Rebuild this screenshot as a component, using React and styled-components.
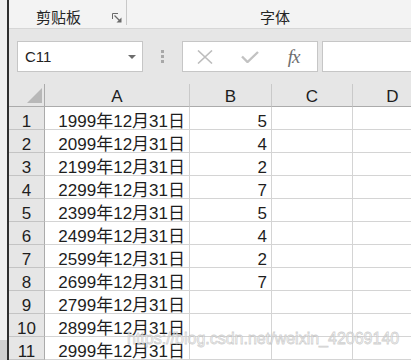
import React from 'react';
import styled, { createGlobalStyle } from 'styled-components';

const GlobalStyle = createGlobalStyle`
  html, body {
    margin: 0;
    padding: 0;
    background: #ffffff;
  }
  * {
    box-sizing: border-box;
  }
`;

const rows = [
  { year: 1999, b: 5 },
  { year: 2099, b: 4 },
  { year: 2199, b: 2 },
  { year: 2299, b: 7 },
  { year: 2399, b: 5 },
  { year: 2499, b: 4 },
  { year: 2599, b: 2 },
  { year: 2699, b: 7 },
  { year: 2799, b: null },
  { year: 2899, b: null },
  { year: 2999, b: null },
];

const columns = ['A', 'B', 'C', 'D'];

const Page = styled.div`
  position: relative;
  display: flex;
  width: 411px;
  height: 360px;
  overflow: hidden;
  font-family: "Liberation Sans", "Noto Sans CJK SC", sans-serif;
`;

const Rail = styled.div`
  width: 7px;
  display: flex;
  flex-direction: column;
`;

const RailPart = styled.div`
  flex: ${p => (p.$fill ? 1 : 'none')};
  height: ${p => (p.$fill ? 'auto' : '20px')};
  background: ${p => (p.$fill ? '#f0f0f0' : '#cfcfcf')};
`;

const Edge = styled.div`
  width: 2px;
  background: #2f2f2f;
`;

const Main = styled.div`
  flex: 1;
  display: flex;
  flex-direction: column;
  overflow: hidden;
`;

const Ribbon = styled.div`
  display: flex;
  height: 30px;
  background: #f3f3f3;
  border-bottom: 1px solid #d6d6d6;
  color: #262626;
  font-size: 15px;
`;

const ClipGroup = styled.div`
  width: 118px;
  display: flex;
  align-items: center;
  padding: 6px 5px 0 27px;
  background: linear-gradient(#c8c8c8, #c8c8c8) right top / 1px 25px no-repeat;
`;

const GroupLabel = styled.span`
  line-height: 18px;
  font-family: "Noto Sans CJK SC", sans-serif;
`;

const Launcher = styled.svg`
  margin-left: auto;
  margin-top: 1px;
`;

const FontGroup = styled.div`
  flex: 1;
  display: flex;
  align-items: center;
  padding: 6px 0 0 133px;
`;

const FormulaBar = styled.div`
  display: flex;
  align-items: flex-start;
  height: 56px;
  padding: 12px 0 0 8px;
  background: #e6e6e6;
`;

const NameBox = styled.div`
  width: 126px;
  height: 31px;
  display: flex;
  align-items: center;
  justify-content: space-between;
  padding: 0 6px 0 7px;
  background: #fff;
  border: 1px solid #c6c6c6;
  font-size: 15px;
  color: #222;
`;

const Dots = styled.div`
  width: 39px;
  height: 31px;
  display: flex;
  flex-direction: column;
  align-items: center;
  justify-content: center;
  gap: 2px;
  padding-right: 1px;
`;

const Dot = styled.span`
  width: 3px;
  height: 3px;
  background: #a8a8a8;
`;

const FxBox = styled.div`
  width: 136px;
  height: 31px;
  display: grid;
  grid-template-columns: repeat(3, 1fr);
  align-items: center;
  justify-items: center;
  background: #fff;
  border: 1px solid #c6c6c6;
`;

const FxLabel = styled.span`
  font-family: "Liberation Serif", serif;
  font-style: italic;
  font-size: 19px;
  color: #6e6e6e;
  letter-spacing: -1px;
  margin-right: 2px;
`;

const FormulaInput = styled.div`
  flex: 1;
  height: 31px;
  margin-left: 4px;
  background: #fff;
  border: 1px solid #c6c6c6;
  border-right: none;
`;

const Sheet = styled.div`
  display: grid;
  grid-template-columns: 36px 145px 82px 81px 80px;
  grid-auto-rows: 23px;
  font-size: 17px;
  color: #1e1e1e;
`;

const HeadCell = styled.div`
  display: flex;
  align-items: flex-end;
  justify-content: ${p => (p.$corner ? 'flex-end' : 'center')};
  padding: ${p => (p.$corner ? '0 2px 3px 0' : '0 0 1px 0')};
  line-height: 17px;
  background: #e6e6e6;
  border-right: 1px solid ${p => (p.$corner ? '#ababab' : '#c9c9c9')};
  border-bottom: 1px solid #ababab;
`;

const RowHead = styled.div`
  display: flex;
  align-items: flex-end;
  justify-content: center;
  line-height: 14px;
  background: #e6e6e6;
  border-right: 1px solid #ababab;
  border-bottom: 1px solid #c4c4c4;
`;

const Cell = styled.div`
  display: flex;
  align-items: flex-end;
  justify-content: flex-end;
  padding: 0 4px 0 0;
  line-height: 14px;
  white-space: nowrap;
  background: #fff;
  border-right: 1px solid #d4d4d4;
  border-bottom: 1px solid #d4d4d4;
`;

const Watermark = styled.div`
  position: absolute;
  left: 127px;
  top: 331px;
  font-size: 16px;
  line-height: 16px;
  white-space: nowrap;
  color: rgba(255, 255, 255, 0.65);
  -webkit-text-stroke: 0.8px rgba(175, 175, 175, 0.6);
  pointer-events: none;
`;

const LauncherIcon = () => (
  <Launcher width="10" height="10" viewBox="0 0 10 10">
    <path d="M0.5 6V0.5H6" fill="none" stroke="#6a6a6a" strokeWidth="1" />
    <path d="M2.5 2.5L8 8" fill="none" stroke="#6a6a6a" strokeWidth="1.2" />
    <path d="M9.5 4.5V9.5H4.5Z" fill="#6a6a6a" />
  </Launcher>
);

const CaretIcon = () => (
  <svg width="8" height="4" viewBox="0 0 8 4">
    <path d="M0 0H8L4 4Z" fill="#6c6c6c" />
  </svg>
);

const CancelIcon = () => (
  <svg width="16" height="14" viewBox="0 0 16 14">
    <path d="M1 0.5L15 13.5M15 0.5L1 13.5" stroke="#bdbdbd" strokeWidth="1.6" fill="none" />
  </svg>
);

const EnterIcon = () => (
  <svg width="18" height="12" viewBox="0 0 18 12">
    <path d="M1 5.5L6.5 11L17 1" stroke="#c2c2c2" strokeWidth="2.4" fill="none" />
  </svg>
);

const CornerIcon = () => (
  <svg width="15" height="15" viewBox="0 0 15 15">
    <path d="M15 0V15H0Z" fill="#b8b8b8" />
  </svg>
);

export default function App() {
  return (
    <Page>
      <GlobalStyle />
      <Rail>
        <RailPart $fill />
        <RailPart />
      </Rail>
      <Edge />
      <Main>
        <Ribbon>
          <ClipGroup>
            <GroupLabel>剪贴板</GroupLabel>
            <LauncherIcon />
          </ClipGroup>
          <FontGroup>
            <GroupLabel>字体</GroupLabel>
          </FontGroup>
        </Ribbon>

        <FormulaBar>
          <NameBox>
            <span>C11</span>
            <CaretIcon />
          </NameBox>
          <Dots>
            <Dot />
            <Dot />
            <Dot />
          </Dots>
          <FxBox>
            <CancelIcon />
            <EnterIcon />
            <FxLabel>fx</FxLabel>
          </FxBox>
          <FormulaInput />
        </FormulaBar>

        <Sheet>
          <HeadCell $corner>
            <CornerIcon />
          </HeadCell>
          {columns.map(c => (
            <HeadCell key={c}>{c}</HeadCell>
          ))}
          {rows.map((r, i) => (
            <React.Fragment key={r.year}>
              <RowHead>{i + 1}</RowHead>
              <Cell>{r.year}年12月31日</Cell>
              <Cell>{r.b}</Cell>
              <Cell />
              <Cell />
            </React.Fragment>
          ))}
        </Sheet>
      </Main>
      <Watermark>https://blog.csdn.net/weixin_42069140</Watermark>
    </Page>
  );
}
